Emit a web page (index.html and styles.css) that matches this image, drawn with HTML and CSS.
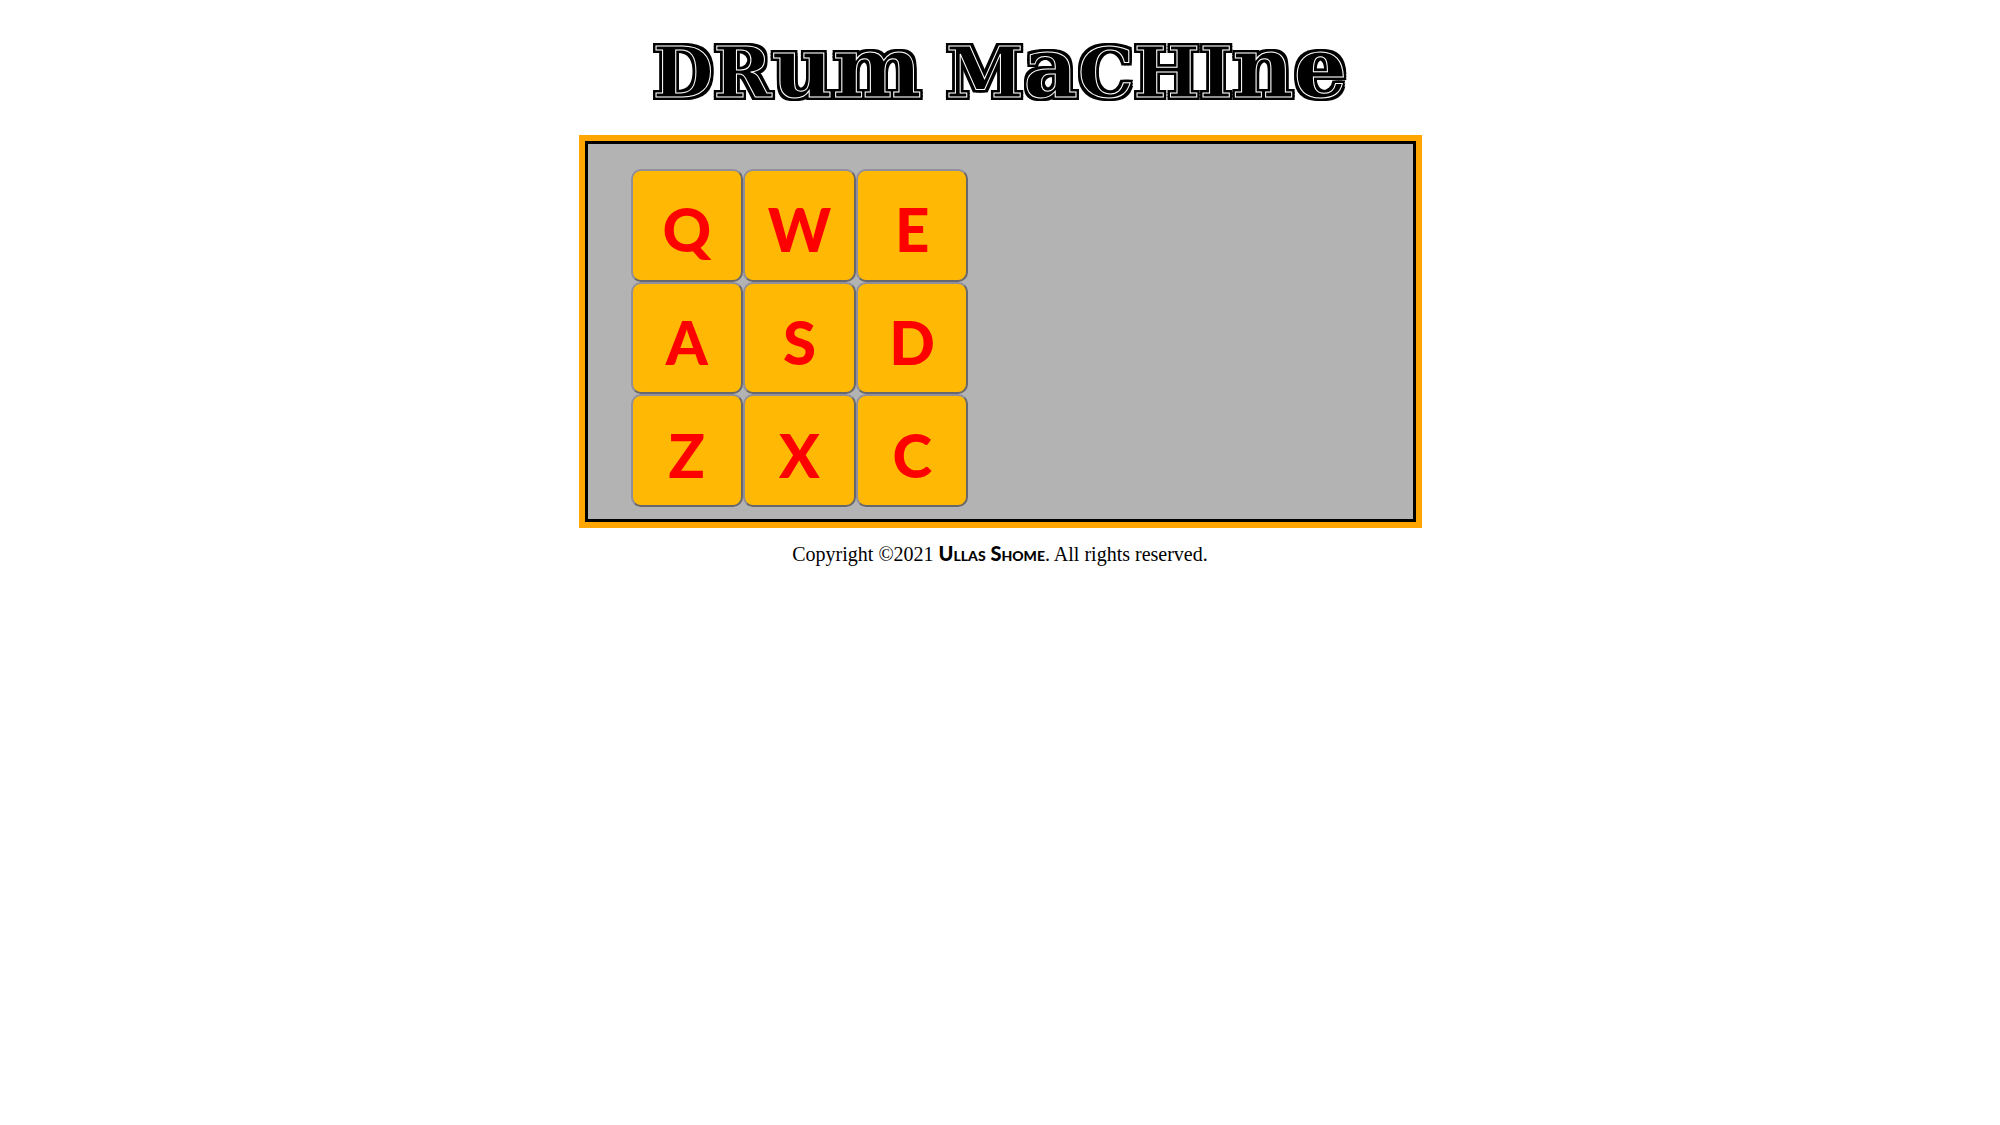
FILE: index.html
```html
<!DOCTYPE html>
<html lang="en">
<head>
  <meta charset="utf-8">
  <meta name="viewport" content="width=device-width, initial-scale=1">
  <title>Drum Machine</title>
  <link rel="stylesheet" href="styles.css">
</head>
<body>
  <header>
    <h1 class="title">DR<span class="tall">um</span> M<span class="tall">a</span>CHI<span class="tall">ne</span></h1>
  </header>
  <main class="machine">
    <div class="panel">
      <div class="pads">
        <button class="pad" type="button">Q</button>
        <button class="pad" type="button">W</button>
        <button class="pad" type="button">E</button>
        <button class="pad" type="button">A</button>
        <button class="pad" type="button">S</button>
        <button class="pad" type="button">D</button>
        <button class="pad" type="button">Z</button>
        <button class="pad" type="button">X</button>
        <button class="pad" type="button">C</button>
      </div>
    </div>
  </main>
  <footer class="footer">Copyright ©2021 <span class="author">Ullas Shome</span>. All rights reserved.</footer>
</body>
</html>
```

FILE: styles.css
```css
* {
  box-sizing: border-box;
}

body {
  margin: 0;
  padding: 0 8px;
  background: #fff;
  color: #000;
  font-family: "Liberation Serif", "Times New Roman", serif;
  font-size: 20px;
}

.title {
  margin: 0;
  padding: 25px 0 14px;
  font-family: "DejaVu Serif", serif;
  font-size: 70px;
  font-weight: 700;
  line-height: 96px;
  text-align: center;
  -webkit-text-stroke: 1px #fff;
  text-shadow:
    3px 0 #000, -3px 0 #000, 0 3px #000, 0 -3px #000,
    3px 3px #000, -3px 3px #000, 3px -3px #000, -3px -3px #000,
    2px 2px #000, -2px 2px #000, 2px -2px #000, -2px -2px #000;
}

/* lowercase forms drawn as high as the capitals */
.tall {
  font-size: 84px;
  line-height: 1px;
}

.machine {
  max-width: 843px;
  margin: 0 auto;
  border: 6px solid #ffa500;
}

.panel {
  padding: 25px 43px 12px;
  border: 3px solid #000;
  background: #b3b3b3;
}

.pads {
  display: grid;
  grid-template-columns: repeat(3, 1fr);
  width: 338px;
  max-width: 100%;
}

.pad {
  aspect-ratio: 1;
  min-width: 0;
  padding: 8px 0 0;
  border: 2px solid;
  border-color: #8f8f9d #67676c #67676c #8f8f9d;
  border-radius: 10px;
  background: #ffb803;
  color: #f00;
  font-family: Lato, sans-serif;
  font-size: 60px;
  font-weight: 900;
  line-height: 68px;
  cursor: pointer;
}

.footer {
  padding: 15px 0;
  line-height: 23px;
  text-align: center;
}

.author {
  font-family: Lato, sans-serif;
  font-size: 20px;
  font-weight: 900;
  font-variant: small-caps;
  line-height: 1px;
}
```
